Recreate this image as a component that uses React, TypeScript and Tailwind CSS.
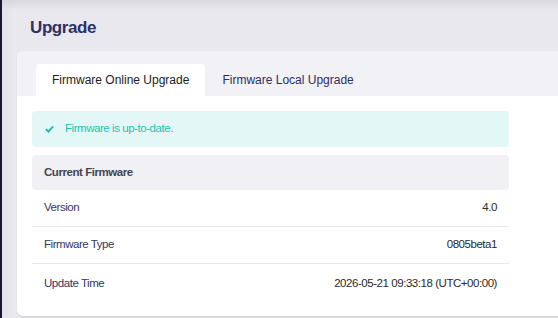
import React from "react";

const rows: [string, string][] = [
  ["Version", "4.0"],
  ["Firmware Type", "0805beta1"],
  ["Update Time", "2026-05-21 09:33:18 (UTC+00:00)"],
];

export default function App() {
  return (
    <div
      className="w-[558px] h-[318px] overflow-hidden flex bg-[#e9e8ee]"
      style={{ fontFamily: '"Liberation Sans", Arial, sans-serif' }}
    >
      <div className="w-[2px] shrink-0 bg-[#161a2b] relative z-10 shadow-[3px_0_10px_rgba(0,0,0,0.12)]" />
      <div className="flex-1 relative flex flex-col">
        <div className="absolute left-0 right-0 top-0 h-[10px] bg-gradient-to-b from-[rgba(0,0,0,0.07)] to-transparent pointer-events-none" />
        <div className="h-[51px] flex items-center pl-[28px] pt-[4px]">
          <h1 className="text-[17px] font-bold tracking-[-0.4px] text-[#2e3068]">Upgrade</h1>
        </div>
        <div className="ml-[15px] w-[560px] h-[265px] bg-white rounded-md shadow-[0_1px_1px_rgba(0,0,0,0.12)] overflow-hidden">
          <div className="h-[45px] bg-[#f2f1f6] flex items-end pl-[19px]">
            <div className="h-[32px] px-[16px] bg-white rounded-t-[3px] flex items-center text-[12px] text-[#1c1c1c]">
              Firmware Online Upgrade
            </div>
            <div className="h-[32px] px-[17px] flex items-center text-[12px] text-[#2e2f5e]">
              Firmware Local Upgrade
            </div>
          </div>
          <div className="pt-[15px] pl-[15px] w-[492px] text-[11.5px] tracking-[-0.45px]">
            <div className="h-[36px] rounded-[4px] bg-[#e3f7f7] flex items-center pl-[13px] text-[#20c4b3]">
              <svg width="9" height="8" viewBox="0 0 10 8" className="mr-[11px]">
                <path d="M1 4.2 L3.8 7 L9 1" fill="none" stroke="#20b8a8" strokeWidth="2" />
              </svg>
              Firmware is up-to-date.
            </div>
            <div className="mt-[8px] h-[35px] rounded-[4px] bg-[#f1f0f5] flex items-center pl-[12px] font-bold text-[#46464f]">
              Current Firmware
            </div>
            {rows.map(([k, v], i) => (
              <div
                key={k}
                className={`h-[37px] flex items-center justify-between px-[12px] ${
                  i < rows.length - 1 ? "border-b border-[#e8e8ec]" : "pt-[2px]"
                }`}
              >
                <span className="text-[#343660]">{k}</span>
                <span className="text-[#2a2a2a]">{v}</span>
              </div>
            ))}
          </div>
        </div>
      </div>
    </div>
  );
}
